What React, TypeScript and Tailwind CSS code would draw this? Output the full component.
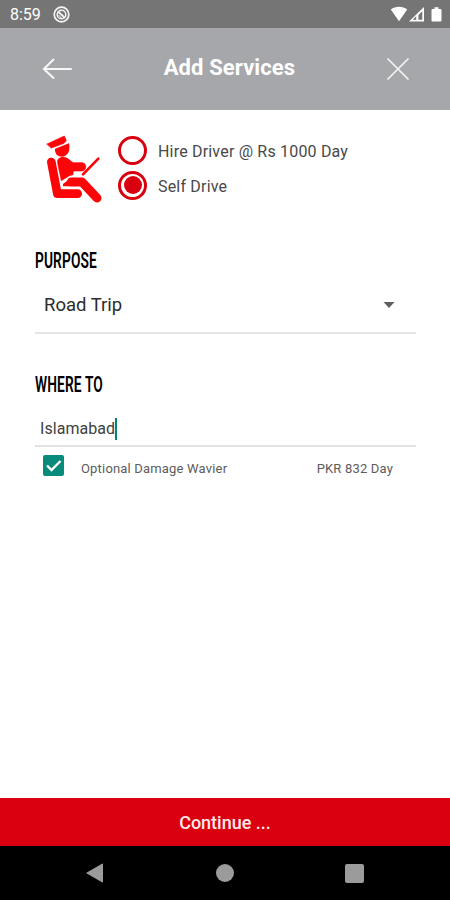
import { useState } from 'react';

interface DriverOptionProps {
  label: string;
  selected: boolean;
  onSelect: () => void;
}

function StatusBar() {
  return (
    <div className="flex h-7 items-center justify-between bg-[#757575] pl-[10px] pr-[8px]">
      <div className="flex items-center gap-[12px] pt-[2px]">
        <span className="w-[31px] whitespace-nowrap text-[16px] leading-7 text-white">8:59</span>
        <svg width="18" height="18" viewBox="0 0 18 18" fill="none" stroke="#f5f5f5">
          <circle cx="8.5" cy="8.5" r="7.3" strokeWidth="1.7" />
          <circle cx="8.5" cy="8.5" r="4.3" strokeWidth="1.5" />
          <path d="M5 5.5l7 6.5" strokeWidth="1.8" />
          <path d="M5.5 9l2.8 3" strokeWidth="1" />
        </svg>
      </div>
      <svg width="52" height="18" viewBox="0 0 52 18" fill="#ffffff">
        <path d="M0.8 4.6C5.6 0.9 12.4 0.9 17.2 4.6L9 16.2z" />
        <path fillRule="evenodd" d="M19 16.4L34 2v14.4zM26.2 14.8V11.2L22.6 14.8zM28.4 14.8h3.9V6.2l-3.9 3.8z" />
        <path d="M42.5 4h2V2.2h4V4h2q1 0 1 1v10.4q0 1-1 1h-8q-1 0-1-1V5q0-1 1-1z" />
      </svg>
    </div>
  );
}

function Header() {
  return (
    <header className="flex h-[82px] items-center justify-between bg-[#a6a7aa] pl-[42px] pr-[41px]">
      <button aria-label="Back">
        <svg width="30" height="22" viewBox="0 0 30 22" fill="none" stroke="#f7f7f7" strokeWidth="2" strokeLinecap="round" strokeLinejoin="round">
          <path d="M29 11H1.8M11.5 1.5L1.8 11l9.7 9" />
        </svg>
      </button>
      <h1 className="-mt-1 text-[22px] font-bold tracking-[0.1px] text-white">Add Services</h1>
      <button aria-label="Close">
        <svg width="22" height="22" viewBox="0 0 22 22" fill="none" stroke="#f4f4f4" strokeWidth="1.7" strokeLinecap="round">
          <path d="M1 1l20 20M21 1L1 21" />
        </svg>
      </button>
    </header>
  );
}

function DriverIcon() {
  return (
    <svg width="60" height="70" viewBox="45 40 180 210" fill="#fb0509" stroke="#fb0509" strokeLinecap="round" strokeLinejoin="round">
      {/* cap and head */}
      <path d="M51 73L103 49l6 14-7 8-38 14z" strokeWidth="2" />
      <path d="M75 87l42-16c5 22-4 40-21 40-13 0-22-9-21-24z" stroke="none" />
      {/* seat */}
      <path d="M64 127L82 222h61" fill="none" strokeWidth="26" />
      {/* body and arm */}
      <path d="M100 113c-14 0-19 7-17 18l11 52 24-15 11-3 1-11h26c15-1 15-24 1-25h-27c-10-4-15-16-30-16z" strokeWidth="2" />
      {/* legs */}
      <path d="M124 187h32l45 48" fill="none" strokeWidth="27" />
      <path d="M100 192l23-18v26h-21q-6-2-2-8z" stroke="none" />
      {/* wheel */}
      <path d="M159 164l46-47" strokeWidth="8" />
    </svg>
  );
}

function DriverOption({ label, selected, onSelect }: DriverOptionProps) {
  return (
    <button role="radio" aria-checked={selected} onClick={onSelect} className="flex h-[34px] items-center gap-[11px]">
      <span className="flex size-[29px] items-center justify-center rounded-full border-[3px] border-[#d90010]">
        {selected && <span className="size-[18px] rounded-full bg-[#d90010]" />}
      </span>
      <span className="whitespace-nowrap pt-[3px] text-[16px] tracking-[0.19px] text-[#494949]">{label}</span>
    </button>
  );
}

function SectionTitle({ text }: { text: string }) {
  return (
    <h2 className="h-6 origin-left scale-x-[0.625] whitespace-nowrap pt-px text-[22px] font-semibold leading-6 tracking-[0.2px] text-black">
      {text}
    </h2>
  );
}

export default function App() {
  const [driver, setDriver] = useState('self');
  const [waiver, setWaiver] = useState(true);

  return (
    <div className="flex h-[900px] w-[450px] flex-col overflow-hidden bg-white font-['Roboto',sans-serif]">
      <StatusBar />
      <Header />

      <main className="flex-1 pl-[35px] pr-[34px]">
        <div className="flex pt-[23px]">
          <div className="ml-[10px] w-[73px]">
            <DriverIcon />
          </div>
          <div role="radiogroup" className="flex flex-col gap-px">
            <DriverOption label="Hire Driver @ Rs 1000 Day" selected={driver === 'hire'} onSelect={() => setDriver('hire')} />
            <DriverOption label="Self Drive" selected={driver === 'self'} onSelect={() => setDriver('self')} />
          </div>
        </div>

        <section className="mt-[45px]">
          <SectionTitle text="PURPOSE" />
          <div className="flex h-[62px] items-center justify-between border-b-2 border-[#e6e6e6] pl-[9px] pr-[21px] pt-[5px]">
            <span className="pt-[2px] text-[18.5px] text-[#2c2c2c]">Road Trip</span>
            <svg width="12" height="6" viewBox="0 0 12 6" fill="#606060">
              <path d="M0.5 0h11L6 6z" />
            </svg>
          </div>
        </section>

        <section className="mt-[38px]">
          <SectionTitle text="WHERE TO" />
          <div className="flex h-[51px] items-center border-b-2 border-[#e2e2e2] pl-[5px] pt-[16px]">
            <span className="text-[16px] tracking-[0.05px] text-[#404040]">Islamabad</span>
            <span className="h-[22px] w-[2px] bg-[#008577]" />
          </div>
        </section>

        <div className="flex h-[42px] items-center pl-[8px] pr-[23px] text-[13px] tracking-[0.18px] text-[#5c5c5c]">
          <button className="-mt-[5px]" role="checkbox" aria-checked={waiver} aria-label="Optional Damage Wavier" onClick={() => setWaiver(!waiver)}>
            <svg width="21" height="21" viewBox="0 0 21 21">
              <rect width="21" height="21" rx="2" fill="#098b7c" />
              {waiver && <path d="M4 10.5l4.5 4.5L17.5 6" fill="none" stroke="#ffffff" strokeWidth="2.4" />}
            </svg>
          </button>
          <span className="ml-[17px] pt-px">Optional Damage Wavier</span>
          <span className="ml-auto pt-px">PKR 832 Day</span>
        </div>
      </main>

      <button className="h-12 bg-[#da0010] pt-px text-[18px] font-medium text-[#ffe9e9]">Continue ...</button>

      <nav className="flex h-[54px] items-center justify-between bg-black pl-[86px] pr-[86px]">
        <svg width="17" height="20" viewBox="0 0 17 20" fill="#9b9b9b">
          <path d="M16 0.7q1-.5 1 .5v17.6q0 1-1 .5L.8 10.5q-.8-.5 0-1z" />
        </svg>
        <span className="ml-[2px] size-[18px] rounded-full bg-[#9b9b9b]" />
        <span className="size-[19px] rounded-[2px] bg-[#9b9b9b]" />
      </nav>
    </div>
  );
}
